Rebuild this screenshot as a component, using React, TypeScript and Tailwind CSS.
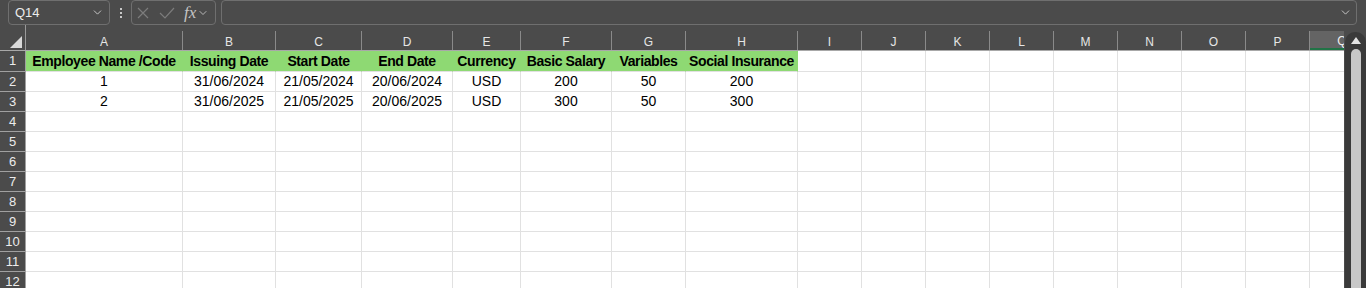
import { ChevronDown } from 'lucide-react';

const columns = [
  { label: 'A', w: 'w-[157px]' },
  { label: 'B', w: 'w-[93px]' },
  { label: 'C', w: 'w-[86px]' },
  { label: 'D', w: 'w-[91px]' },
  { label: 'E', w: 'w-[68px]' },
  { label: 'F', w: 'w-[91px]' },
  { label: 'G', w: 'w-[74px]' },
  { label: 'H', w: 'w-[112px]' },
  { label: 'I', w: 'w-[64px]' },
  { label: 'J', w: 'w-[64px]' },
  { label: 'K', w: 'w-[64px]' },
  { label: 'L', w: 'w-[64px]' },
  { label: 'M', w: 'w-[64px]' },
  { label: 'N', w: 'w-[64px]' },
  { label: 'O', w: 'w-[64px]' },
  { label: 'P', w: 'w-[64px]' },
  { label: 'Q', w: 'w-[64px]' },
];

const headers = [
  'Employee Name /Code',
  'Issuing Date',
  'Start Date',
  'End Date',
  'Currency',
  'Basic Salary',
  'Variables',
  'Social Insurance',
];

const data = [
  ['1', '31/06/2024', '21/05/2024', '20/06/2024', 'USD', '200', '50', '200'],
  ['2', '31/06/2025', '21/05/2025', '20/06/2025', 'USD', '300', '50', '300'],
];

const rowNumbers = Array.from({ length: 12 }, (_, i) => i + 1);

const FormulaBar = () => (
  <div className="flex h-[25px] items-start bg-[#4b4b4b]">
    <div className="ml-[8px] flex h-[25px] w-[102px] items-center justify-between rounded-[4px] border border-[#6f6f6f] pl-[6px] pr-[5px]">
      <span className="text-[13px] text-[#ececec]">Q14</span>
      <ChevronDown size={13} strokeWidth={1.6} className="text-[#d6d6d6]" />
    </div>
    <div className="flex h-[25px] w-[21px] flex-col items-center justify-center gap-[2px]">
      <span className="h-[2px] w-[2px] bg-[#c8c8c8]" />
      <span className="h-[2px] w-[2px] bg-[#c8c8c8]" />
      <span className="h-[2px] w-[2px] bg-[#c8c8c8]" />
    </div>
    <div className="flex h-[25px] w-[85px] items-center rounded-[4px] border border-[#6f6f6f] pl-[5px]">
      <svg width="12" height="12" viewBox="0 0 12 12">
        <path d="M1 1 L11 11 M11 1 L1 11" stroke="#7c7c7c" strokeWidth="1.2" fill="none" />
      </svg>
      <svg width="16" height="12" viewBox="0 0 16 12" className="ml-[10px]">
        <path d="M1 6 L6 11 L15 1" stroke="#7c7c7c" strokeWidth="1.2" fill="none" />
      </svg>
      <span className="ml-[9px] font-['Liberation_Serif',serif] text-[17px] italic leading-none text-[#c4c4c4]">
        fx
      </span>
      <ChevronDown size={12} strokeWidth={1.6} className="ml-[1px] text-[#d0d0d0]" />
    </div>
    <div className="ml-[5px] mr-[9px] flex h-[25px] flex-1 items-center justify-end rounded-[4px] border border-[#6f6f6f] pr-[4px]">
      <ChevronDown size={13} strokeWidth={1.6} className="text-[#d6d6d6]" />
    </div>
  </div>
);

const ColumnHeaders = () => (
  <div className="flex h-[26px] border-b border-[#a8a8a8] bg-[#4b4b4b]">
    <div className="relative w-[26px] shrink-0 border-r border-[#9a9a9a]">
      <div className="absolute left-[10px] top-[11px] h-0 w-0 border-b-[12px] border-l-[12px] border-b-[#d9d9d9] border-l-transparent" />
    </div>
    {columns.map((c) => (
      <div key={c.label} className={`${c.w} flex shrink-0 flex-col justify-end`}>
        <div
          className={
            c.label === 'Q'
              ? 'flex h-[19px] items-center justify-center border-b-2 border-[#217346] bg-[#646464] pt-[2px] text-[12px] text-[#f0f0f0]'
              : 'flex h-[19px] items-center justify-center border-r border-[#8a8a8a] pt-[3px] text-[12px] text-[#e6e6e6]'
          }
        >
          {c.label}
        </div>
      </div>
    ))}
  </div>
);

const Row = ({ n }: { n: number }) => {
  const isHeader = n === 1;
  const values = isHeader ? headers : data[n - 2];
  return (
    <div className={`flex ${isHeader ? 'h-[21px]' : 'h-[20px]'}`}>
      <div className="flex w-[26px] shrink-0 items-center justify-center border-b border-r border-[#a0a0a0] bg-[#4b4b4b] text-[13px] text-[#ececec]">
        {n}
      </div>
      {columns.map((c, i) => {
        const v = values ? values[i] : undefined;
        const green = isHeader && i < 8;
        return (
          <div
            key={c.label}
            className={`${c.w} flex shrink-0 items-center justify-center overflow-hidden whitespace-nowrap border-b border-r border-[#e1e1e1] text-[14px] text-black ${
              green
                ? 'border-r-[#8ed973] bg-[#8ed973] pt-[1px] font-bold tracking-[-0.4px]'
                : 'bg-white'
            }`}
          >
            {v}
          </div>
        );
      })}
    </div>
  );
};

const Scrollbar = () => (
  <div className="w-[22px] shrink-0 bg-[#4b4b4b] pl-[1px] pt-[7px]">
    <div className="flex h-full flex-col items-center rounded-t-[10px] bg-[#3a3a3a] pt-[5px]">
      <div className="h-0 w-0 border-b-[7px] border-l-[5px] border-r-[5px] border-b-[#e4e4e4] border-l-transparent border-r-transparent" />
      <div className="mt-[5px] h-full w-[10px] rounded-t-[5px] bg-[#c8c8c8]" />
    </div>
  </div>
);

export default function App() {
  return (
    <div className="h-[288px] w-[1366px] overflow-hidden bg-white font-['Liberation_Sans',Arial,sans-serif]">
      <FormulaBar />
      <div className="flex h-[263px]">
        <div className="min-w-0 flex-1 overflow-hidden">
          <ColumnHeaders />
          {rowNumbers.map((n) => (
            <Row key={n} n={n} />
          ))}
        </div>
        <Scrollbar />
      </div>
    </div>
  );
}
